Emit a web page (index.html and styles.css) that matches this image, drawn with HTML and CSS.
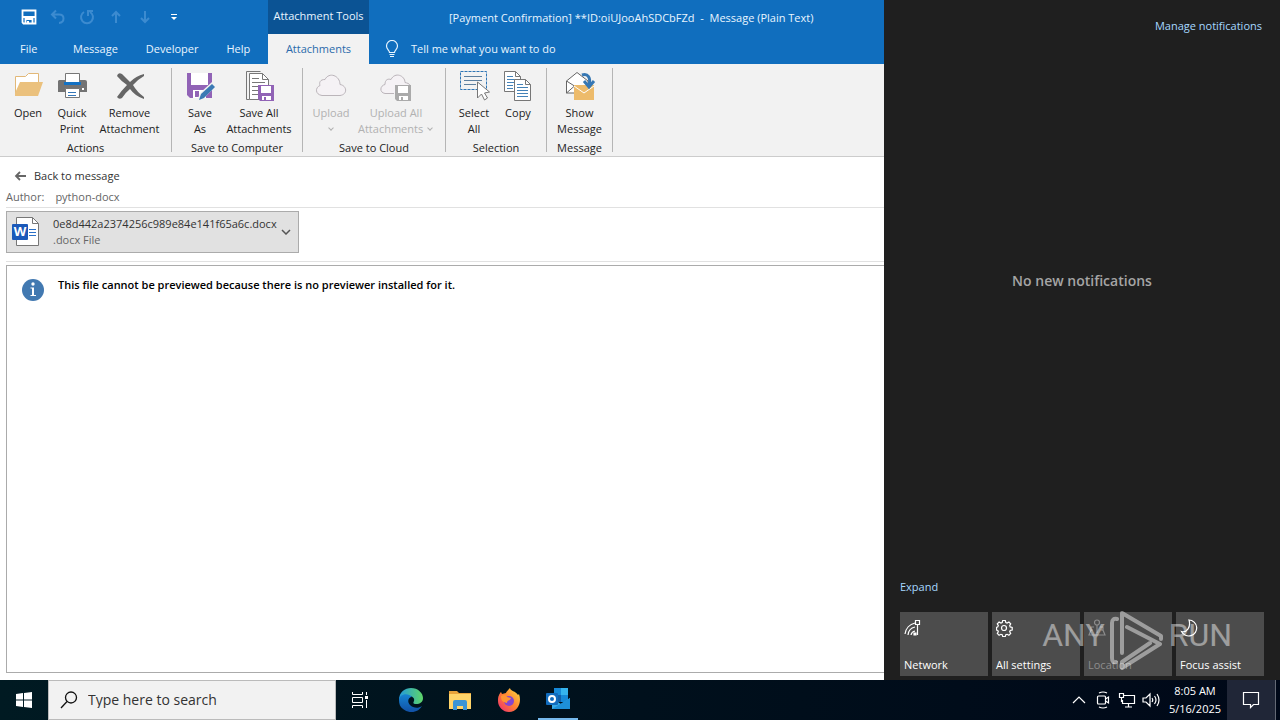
FILE: index.html
```html
<!DOCTYPE html>
<html lang="en">
<head>
    <meta charset="UTF-8">
    <meta name="viewport" content="width=device-width, initial-scale=1.0">
    <title>Message (Plain Text)</title>
    <link rel="stylesheet" href="styles.css">
</head>
<body>
    <div class="desktop">
        <main class="window">
            <header class="title-area">
                <div class="quick-access">
                    <button aria-label="Save"><svg width="16" height="16" viewBox="0 0 16 16"><path d="M1.5 1.5h13v13h-12l-1-1z" fill="none" stroke="#fff" stroke-width="1.8"/><path d="M2 8h12M4.500 14v-4h7v4" fill="none" stroke="#fff" stroke-width="1.8"/><path d="M6 12h2v3H6z" fill="#fff"/></svg></button>
                    <button class="dim" aria-label="Undo"><svg width="16" height="16" viewBox="0 0 16 16"><path d="M6 1.5L2 5.5l4 4M2 5.5h7c6 0 6 8 0 8.5"/></svg></button>
                    <button class="dim" aria-label="Redo"><svg width="16" height="16" viewBox="0 0 16 16"><path d="M5 3a6 6 0 1 0 6 0M9 7V2h5"/></svg></button>
                    <button class="dim" aria-label="Previous item"><svg width="16" height="16" viewBox="0 0 16 16"><path d="M8 14V3M4 7l4-4 4 4"/></svg></button>
                    <button class="dim" aria-label="Next item"><svg width="16" height="16" viewBox="0 0 16 16"><path d="M8 2v11M4 9l4 4 4-4"/></svg></button>
                    <button aria-label="Customize toolbar"><svg width="8" height="8" viewBox="0 0 8 8"><path d="M1 1.5h6" stroke="#fff"/><path d="M1 4h6L4 7z" fill="#fff"/></svg></button>
                </div>
                <div class="context-title">Attachment Tools</div>
                <div class="window-title">[Payment Confirmation] **ID:oiUJooAhSDCbFZd&nbsp; -&nbsp; Message (Plain Text)</div>
                <nav class="tabs">
                    <button class="file-tab">File</button>
                    <button>Message</button>
                    <button>Developer</button>
                    <button>Help</button>
                </nav>
                <button class="active-tab">Attachments</button>
                <button class="tell-me">
                    <svg width="14" height="18" viewBox="0 0 14 18"><path d="M4.5 12.5c0-2-3-3-3-6.5a5.500 5.500 0 0 1 11 0c0 3.500-3 4.500-3 6.500zM4.500 14.500h5M5 16.500h4" fill="none" stroke="#e8f5ff" stroke-width="1.200"/></svg>
                    Tell me what you want to do
                </button>
            </header>

            <section class="ribbon">
                <div class="group">
                    <div class="group-buttons">
                        <button class="tool"><svg width="32" height="32" viewBox="0 0 32 32"><path d="M3.500 26V7.500h10l3-3h10V13" fill="#fff" stroke="#e2b878"/><path d="M3 27V24l5-11h23l-5 14z" fill="#ebc17d"/></svg><span>Open</span></button>
                        <button class="tool"><svg width="32" height="32" viewBox="0 0 32 32"><path d="M3 11h26q2 0 2 2v10H2V12z" fill="#737373"/><path d="M9.500 4.500h14v9h-14z" fill="#fff" stroke="#777"/><path d="M8 13h17v3H8z" fill="#1472c4"/><path d="M9.500 19.500h14v9h-14z" fill="#fff" stroke="#777"/><path d="M12 23.500h8M12 26.500h8" stroke="#3577b8"/><path d="M26 19h2v2h-2z" fill="#fff"/></svg><span>Quick<br>Print</span></button>
                        <button class="tool remove"><svg width="32" height="32" viewBox="0 0 32 32"><path d="M3 7q1-4 5-2l8 8Q22 7 30 5v2q-7 4-11 9 4 7 11 12v2q-9-3-14-10-5 4-8 9-3 2-5-1 5-7 10-12Q8 13 3 7z" fill="#666"/></svg><span>Remove<br>Attachment</span></button>
                    </div>
                    <h2>Actions</h2>
                </div>
                <div class="group">
                    <div class="group-buttons">
                        <button class="tool"><svg width="32" height="32" viewBox="0 0 32 32"><path d="M3 4h25v25H6l-3-3z" fill="#9163b6"/><path d="M7 4h17v12H7z" fill="#fff"/><path d="M9 21h13v8H9z" fill="#fff"/><path d="M11 22h4v6h-4z" fill="#9163b6"/><path d="M13 32l3-8 12-11 4 4-12 12z" fill="#f2f2f2"/><path d="M15 31l2-6 11-10 3 3-11 11z" fill="#3b7ab4"/></svg><span>Save<br>As</span></button>
                        <button class="tool save-all"><svg width="32" height="32" viewBox="0 0 32 32"><path d="M17.500 2.500h-14v28h3" fill="none" stroke="#777"/><path d="M6.500 4.500h13l6 6v20h-19z" fill="#fff" stroke="#777"/><path d="M19.500 4.500v6h6M9 9.500h7M9 13.500h13M9 17.500h8M9 21.500h6M9 25.500h6" fill="none" stroke="#777"/><path d="M15 16h16v16H17l-2-2z" fill="#9163b6"/><path d="M18 17h10v7H18z" fill="#fff"/><path d="M19 27h9v4h-9z" fill="#fff"/><path d="M21 28h2v4h-2z" fill="#9163b6"/></svg><span>Save All<br>Attachments</span></button>
                    </div>
                    <h2>Save to Computer</h2>
                </div>
                <div class="group">
                    <div class="group-buttons">
                        <button class="tool" disabled><svg width="32" height="32" viewBox="0 0 32 32"><path d="M7 26.500h18c8-1 7-10 0-11 0-9-11-13-15-5-5 0-6 3-5 6-5 2-5 9 2 10z" fill="#f5f2f5" stroke="#bbb5ba"/></svg><span>Upload<br><i class="caret"></i></span></button>
                        <button class="tool upload-all" disabled><svg width="32" height="32" viewBox="0 0 32 32"><path d="M14 24.500H5c-6-1-5-8 0-9 0-5 3-6 6-5 4-8 14-4 14 3 5 1 6 3 5 6" fill="#f5f2f5" stroke="#bbb5ba"/><path d="M15 16h16v16H17l-2-2z" fill="#aaa"/><path d="M18 17h10v7H18z" fill="#fff"/><path d="M19 27h9v4h-9z" fill="#fff"/><path d="M21 28h2v4h-2z" fill="#aaa"/></svg><span>Upload All<br>Attachments <i class="caret"></i></span></button>
                    </div>
                    <h2>Save to Cloud</h2>
                </div>
                <div class="group">
                    <div class="group-buttons">
                        <button class="tool"><svg width="32" height="32" viewBox="0 0 32 32"><path d="M2.500 2.500h26v18h-26z" fill="none" stroke="#2e75b5" stroke-dasharray="3 1"/><path d="M6 7.500h18M6 11.500h18M6 15.500h12" stroke="#5c7f9f"/><path d="M19.500 13v16l4-4 3 6 3-2-3-5 5-1z" fill="#fff" stroke="#777"/></svg><span>Select<br>All</span></button>
                        <button class="tool"><svg width="32" height="32" viewBox="0 0 32 32"><path d="M2.500 2.500h11l5 5v15h-16z" fill="#fff" stroke="#777"/><path d="M13.500 2.500v5h5" fill="none" stroke="#777"/><path d="M5 7.500h6M5 10.500h8M5 13.500h8M5 16.500h6M5 19.500h6" stroke="#4482b8"/><path d="M12.500 10.500h11l5 5v16h-16z" fill="#fff" stroke="#777"/><path d="M23.500 10.500v5h5" fill="none" stroke="#777"/><path d="M15 15.500h6M15 18.500h11M15 21.500h11M15 24.500h11M15 27.500h11" stroke="#4482b8"/></svg><span>Copy</span></button>
                    </div>
                    <h2>Selection</h2>
                </div>
                <div class="group">
                    <div class="group-buttons">
                        <button class="tool show-message"><svg width="32" height="32" viewBox="0 0 32 32"><path d="M2.500 24V12L13 3.500 24 12v12z" fill="#fff" stroke="#666"/><path d="M2.500 12l8 5M2.500 24l8-7" fill="none" stroke="#666"/><path d="M10 16h20v15H10z" fill="#edbb6b"/><path d="M10 17l10 7 10-7" fill="none" stroke="#fff"/><path d="M18 6c6-2 9 3 7 10M20 12l5 6 5-6" fill="none" stroke="#3677b3" stroke-width="3"/></svg><span>Show<br>Message</span></button>
                    </div>
                    <h2>Message</h2>
                </div>
            </section>

            <section class="preview">
                <button class="back"><svg width="12" height="10" viewBox="0 0 12 10"><path d="M12 5H2M6 1L2 5l4 4" fill="none" stroke="#666" stroke-width="1.800"/></svg>Back to message</button>
                <div class="author"><span>Author:</span><span>python-docx</span></div>
                <div class="file-row">
                    <button class="file">
                        <svg width="28" height="32" viewBox="0 0 28 32"><path d="M4.500 1.500h16l6 6v22h-22z" fill="#fff" stroke="#777"/><path d="M20.500 1.500v6h6" fill="none" stroke="#777"/><path d="M17 13.500h7M17 16.500h7M17 19.500h7" stroke="#2a70c8"/><rect y="8" width="16" height="16" rx="1" fill="#1b59b9"/><text x="8" y="20" text-anchor="middle" class="word-mark">W</text></svg>
                        <span class="file-name">0e8d442a2374256c989e84e141f65a6c.docx<small>.docx File</small></span>
                        <svg width="10" height="6" viewBox="0 0 10 6"><path d="M1 1l4 4 4-4" fill="none" stroke="#555" stroke-width="1.500"/></svg>
                    </button>
                </div>
                <div class="viewer">
                    <svg width="22" height="22" viewBox="0 0 22 22"><circle cx="11" cy="11" r="11" fill="#4279b1"/><circle cx="11" cy="5" r="1.700" fill="#fff"/><path d="M8.500 8.500H12V16h2v1H8.500v-1H10V9.500H8.500z" fill="#fff"/></svg>
                    <p>This file cannot be previewed because there is no previewer installed for it.</p>
                </div>
            </section>
        </main>

        <aside class="action-center">
            <a class="manage" href="#">Manage notifications</a>
            <p class="empty">No new notifications</p>
            <a class="expand" href="#">Expand</a>
            <div class="tiles">
                <button><svg width="18" height="18" viewBox="0 0 18 18"><path d="M1 15A13 13 0 0 1 11 4M4 16a9 9 0 0 1 7-8M7 16a5 5 0 0 1 4-4M13.500 5v11M11.500 1.500h4v4h-4z"/><path d="M10 14h2v2h-2z" fill="#fff"/></svg>Network</button>
                <button><svg width="18" height="18" viewBox="0 0 18 18"><circle cx="8" cy="9" r="2.500"/><path d="M6.700 1.500h2.600l.5 2 1.300.5 1.800-1 1.800 1.800-1 1.800.5 1.300 2 .5V11l-2 .5-.5 1.200 1 1.800-1.800 1.800-1.800-1-1.300.5-.5 1.700H6.700l-.5-1.700-1.300-.5-1.800 1-1.800-1.800 1-1.800-.5-1.200L.5 11V8.400l1.300-.5.5-1.300-1-1.800L3.100 3l1.800 1 1.300-.5z"/></svg>All settings</button>
                <button disabled><svg width="18" height="18" viewBox="0 0 18 18"><circle cx="9" cy="3.500" r="2.500"/><path d="M9 6v8M6 8H3v4M12 8h3v4M5 11H3l-2 5h16l-2-5h-2"/></svg>Location</button>
                <button><svg width="18" height="18" viewBox="0 0 18 18"><path d="M9 1a8 8 0 1 1-7.500 11.500C7 14 11 8 9 1z"/></svg>Focus assist</button>
            </div>
            <div class="watermark">
                <span>ANY</span>
                <svg width="56" height="62" viewBox="0 0 56 62" fill="none" stroke="currentColor" stroke-width="4" stroke-linecap="round" stroke-linejoin="round"><path d="M8 9q-5-1-5 4v35q0 5 4 4M13 43V3l39 23v3M18 17l33 17-38 24v-6l28-19"/></svg>
                <span>RUN</span>
            </div>
        </aside>
    </div>

    <footer class="taskbar">
        <button class="start" aria-label="Start"><svg width="16" height="16" viewBox="0 0 16 16"><path d="M0 2l7-1v6.500H0zM8 1l8-1v7.500H8zM0 8.500h7V15l-7-1zM8 8.500h8V16l-8-1z" fill="#fff"/></svg></button>
        <label class="search">
            <svg width="18" height="18" viewBox="0 0 18 18"><circle cx="11" cy="6.500" r="5.500" fill="none" stroke="#111" stroke-width="1.300"/><path d="M7 10.500L1 17" stroke="#111" stroke-width="1.300"/></svg>
            <input type="text" placeholder="Type here to search" aria-label="Type here to search">
        </label>
        <div class="apps">
            <button class="task-view" aria-label="Task view"><svg width="18" height="18" viewBox="0 0 18 18"><path d="M1.500 1v2.500h10V1M1.500 6.500h10v5h-10zM1.500 17v-2.500h10V17M15.500 1v3M15.500 9v8" fill="none" stroke="#fff"/><path d="M14 5h3v3h-3z" fill="#fff"/></svg></button>
            <button aria-label="Edge"><svg width="24" height="24" viewBox="0 0 24 24">
                <defs><linearGradient id="edge-top" x2="1"><stop stop-color="#2299dc"/><stop offset="1" stop-color="#5fd668"/></linearGradient><linearGradient id="edge-low" y2="1" x2="0"><stop stop-color="#1684d2"/><stop offset="1" stop-color="#1150a5"/></linearGradient></defs>
                <path d="M0 12C0 4 6 0 12 0c7 0 12 5 12 10 0 4-3 6-7 6-3 0-3-1-2-3 1-3-2-5-5-5z" fill="url(#edge-top)"/><path d="M0 12c0-6 9-8 13-3-4 0-5 5-2 8 3 3 8 4 12 1-4 7-13 8-19 3-3-2-4-5-4-9z" fill="url(#edge-low)"/></svg></button>
            <button aria-label="File Explorer"><svg width="22" height="20" viewBox="0 0 22 20"><path d="M0 1h8l2 2h12v16H0z" fill="#e8a33a"/><path d="M0 4h22v15H0z" fill="#ffd469"/><path d="M4 12q0-2 2-2h10q2 0 2 2v8h-4v-4H8v4H4z" fill="#3994d6"/></svg></button>
            <button aria-label="Firefox"><svg width="24" height="24" viewBox="0 0 24 24">
                <defs><linearGradient id="fox" x1="1" y2="1" x2="0"><stop stop-color="#ffe244"/><stop offset=".5" stop-color="#ff8131"/><stop offset="1" stop-color="#ed2677"/></linearGradient></defs>
                <path d="M1 11c0-3 2-6 3-7l1 2 4-1c0-1 2-3 4-5 0 3 6 3 8 7l1-1c3 8-1 18-10 18C6 24 1 19 1 13z" fill="url(#fox)"/><circle cx="12" cy="13" r="5" fill="#8546cf"/><path d="M4 8c3-2 5-1 6 1l4 1c-1 3-4 2-4 5-5-1-6-3-6-7z" fill="#ff9533"/></svg></button>
            <button class="running" aria-label="Outlook"><svg width="26" height="24" viewBox="0 0 26 24"><path d="M9 1h14v14H9z" fill="#1689d8"/><path d="M16 1h7v7h-7z" fill="#35b4ee"/><path d="M9 8h7v7H9z" fill="#125fa8"/><path d="M7 11l9 6 9-6v11H7z" fill="#38aae6"/><path d="M7 22l18-11v11z" fill="#1e90d8"/><rect x="1" y="6" width="12" height="12" rx="1" fill="#116cbe"/><circle cx="7" cy="12" r="3" fill="none" stroke="#fff" stroke-width="2"/></svg></button>
        </div>
        <div class="tray">
            <button aria-label="Show hidden icons"><svg width="14" height="14" viewBox="0 0 14 14"><path d="M1 10l6-6 6 6"/></svg></button>
            <button aria-label="Meet now"><svg width="16" height="18" viewBox="0 0 16 18"><path d="M4 2q4-2 8 0M4 16q4 2 8 0"/><rect x="2.500" y="5" width="8" height="8" rx="1"/><path d="M10.500 8l3-2v6l-3-2"/></svg></button>
            <button aria-label="Network"><svg width="18" height="16" viewBox="0 0 18 16"><path d="M6 3.500h10.500v8h-12V8M10.500 12v3M7 15h7M1.500 1.500h4v4h-4zM3.500 5.500V10"/></svg></button>
            <button aria-label="Volume"><svg width="18" height="16" viewBox="0 0 18 16"><path d="M1 6h3l4-4v12l-4-4H1zM10 6q1.500 2 0 4M12.500 4q3 4 0 8M15 2q4 6 0 12"/></svg></button>
            <time class="clock">8:05 AM<br>5/16/2025</time>
            <button class="notify" aria-label="Notifications"><svg width="18" height="18" viewBox="0 0 18 18"><path d="M1.500 1.500h15v12h-5l-3 3v-3h-7z"/></svg></button>
        </div>
    </footer>
</body>
</html>
```

FILE: styles.css
```css
* {
    margin: 0;
    padding: 0;
    box-sizing: border-box;
}

body {
    display: flex;
    flex-direction: column;
    height: 100vh;
    font-family: "Open Sans", "Noto Sans", sans-serif;
    font-size: 11px;
    line-height: 16px;
    overflow: hidden;
}

button {
    border: none;
    background: none;
    font: inherit;
    color: inherit;
}

a {
    text-decoration: none;
}

svg {
    display: block;
    flex-shrink: 0;
}

.desktop {
    display: flex;
    flex: 1;
    min-height: 0;
}

.window {
    display: flex;
    flex-direction: column;
    flex: 1;
    min-width: 0;
    background: #fff;
    color: #333;
}

/* title bar and tabs */
.title-area {
    display: grid;
    grid-template-columns: 268px 101px 1fr;
    grid-template-rows: 34px 30px;
    background: #106ebe;
    color: #e8f5ff;
    white-space: nowrap;
}

.quick-access {
    display: flex;
    align-items: center;
    padding-left: 14px;
}

.quick-access button {
    display: grid;
    place-items: center;
    width: 29px;
    height: 34px;
}

.dim path {
    fill: none;
    stroke: #3c8bd0;
    stroke-width: 2;
}

.context-title {
    background: #0b5394;
    line-height: 32px;
    text-align: center;
}

.window-title {
    padding-left: 80px;
    line-height: 36px;
    overflow: hidden;
}

.tabs {
    display: flex;
}

.tabs button {
    padding: 0 14px;
}

.tabs .file-tab {
    width: 59px;
    padding: 0 20px;
    text-align: left;
}

.active-tab {
    background: #f2f2f2;
    color: #2a6aab;
}

.tell-me {
    display: flex;
    align-items: center;
    gap: 12px;
    padding-left: 16px;
}

/* ribbon */
.ribbon {
    display: flex;
    height: 93px;
    padding: 4px 0;
    background: #f2f2f2;
    border-bottom: 1px solid #ccc;
    color: #222;
}

.group {
    display: flex;
    flex-direction: column;
    justify-content: space-between;
    padding: 0 6px;
    border-right: 1px solid #b5b5b5;
    white-space: nowrap;
}

.group-buttons {
    display: flex;
    align-items: flex-start;
}

.group h2 {
    font-size: 11px;
    font-weight: 400;
    line-height: 8px;
    text-align: center;
}

.tool {
    display: flex;
    flex-direction: column;
    align-items: center;
    gap: 4px;
    width: 44px;
    padding-top: 1px;
}

.tool:disabled {
    color: #b1b1b1;
}

.remove {
    width: 71px;
}

.save-all {
    width: 74px;
}

.upload-all {
    width: 86px;
}

.show-message {
    width: 53px;
}

.caret {
    display: inline-block;
    width: 4px;
    height: 4px;
    margin: 0 2px 3px;
    border: solid #b1b1b1;
    border-width: 0 1px 1px 0;
    transform: rotate(45deg);
}

/* attachment preview */
.preview {
    display: flex;
    flex-direction: column;
    flex: 1;
    padding: 10px 0 7px 6px;
}

.back {
    display: flex;
    align-items: center;
    align-self: flex-start;
    gap: 8px;
    height: 18px;
    padding-left: 8px;
}

.author {
    display: flex;
    gap: 11px;
    height: 23px;
    padding-top: 4px;
    border-bottom: 1px solid #e1e1e1;
    color: #666;
}

.file-row {
    height: 54px;
    padding-top: 3px;
    border-bottom: 1px solid #e1e1e1;
}

.file {
    display: flex;
    align-items: center;
    width: 293px;
    height: 42px;
    padding: 0 7px 0 5px;
    background: #e1e1e1;
    border: 1px solid #ababab;
    text-align: left;
}

.file-name {
    flex: 1;
    padding-left: 13px;
}

.file-name small {
    display: block;
    font-size: 11px;
    color: #666;
}

.word-mark {
    font-size: 13px;
    font-weight: 700;
    fill: #fff;
}

.viewer {
    display: flex;
    flex: 1;
    gap: 14px;
    margin-top: 3px;
    padding: 13px 15px;
    border: 1px solid #ababab;
    border-right: none;
    color: #000;
    font-weight: 600;
}

.viewer p {
    margin-top: -2px;
}

/* notifications panel */
.action-center {
    position: relative;
    display: flex;
    flex-direction: column;
    width: 396px;
    padding: 18px 16px 4px;
    background: #1f1f1f;
    color: #fff;
}

.action-center a {
    color: #a6d8ff;
}

.manage {
    align-self: flex-end;
    margin-right: 2px;
}

.empty {
    margin: auto 0;
    padding-bottom: 52px;
    color: #a5a5a5;
    font-size: 14px;
    font-weight: 600;
    line-height: 20px;
    text-align: center;
}

.action-center .expand {
    margin-bottom: 17px;
}

.tiles {
    display: grid;
    grid-template-columns: repeat(4, 1fr);
    gap: 4px;
}

.tiles button {
    display: flex;
    flex-direction: column;
    justify-content: space-between;
    height: 64px;
    padding: 7px 4px 3px;
    background: #4c4c4c;
    text-align: left;
}

.tiles button:disabled {
    color: #8c8c8c;
}

.tiles svg {
    fill: none;
    stroke: currentColor;
    stroke-width: 1.2;
}

.watermark {
    position: absolute;
    right: 48px;
    bottom: 8px;
    display: flex;
    align-items: center;
    gap: 4px;
    color: #fff;
    font-family: Roboto, "Liberation Sans", sans-serif;
    font-size: 32px;
    line-height: 32px;
    opacity: 0.45;
    pointer-events: none;
}

.watermark span {
    padding-bottom: 12px;
}

/* taskbar */
.taskbar {
    display: flex;
    height: 40px;
    background: linear-gradient(90deg, #001a22, #00101c 50%, #000818);
    color: #fff;
}

.start {
    display: grid;
    place-items: center;
    width: 48px;
}

.search {
    display: flex;
    align-items: center;
    gap: 10px;
    width: 288px;
    padding-left: 11px;
    background: #f2f2f2;
    border: 1px solid #bbb;
}

.search input {
    flex: 1;
    min-width: 0;
    border: none;
    outline: none;
    background: none;
    font: inherit;
    font-size: 14px;
}

.search input::placeholder {
    color: #333;
}

.apps {
    display: flex;
    gap: 1px;
}

.apps button {
    display: grid;
    place-items: center;
    width: 48px;
}

.apps .task-view {
    margin-right: 2px;
}

.apps .running {
    width: 40px;
    margin-left: 4px;
    border-bottom: 2px solid #76b9ed;
}

.tray {
    display: flex;
    align-items: center;
    margin-left: auto;
    padding-right: 4px;
}

.tray button {
    display: grid;
    place-items: center;
    width: 24px;
    height: 40px;
}

.tray svg {
    fill: none;
    stroke: #fff;
    stroke-width: 1.2;
}

.clock {
    width: 64px;
    line-height: 18px;
    text-align: center;
}

.tray .notify {
    width: 49px;
    background: #202637;
    border-right: 1px solid #646975;
}
```
